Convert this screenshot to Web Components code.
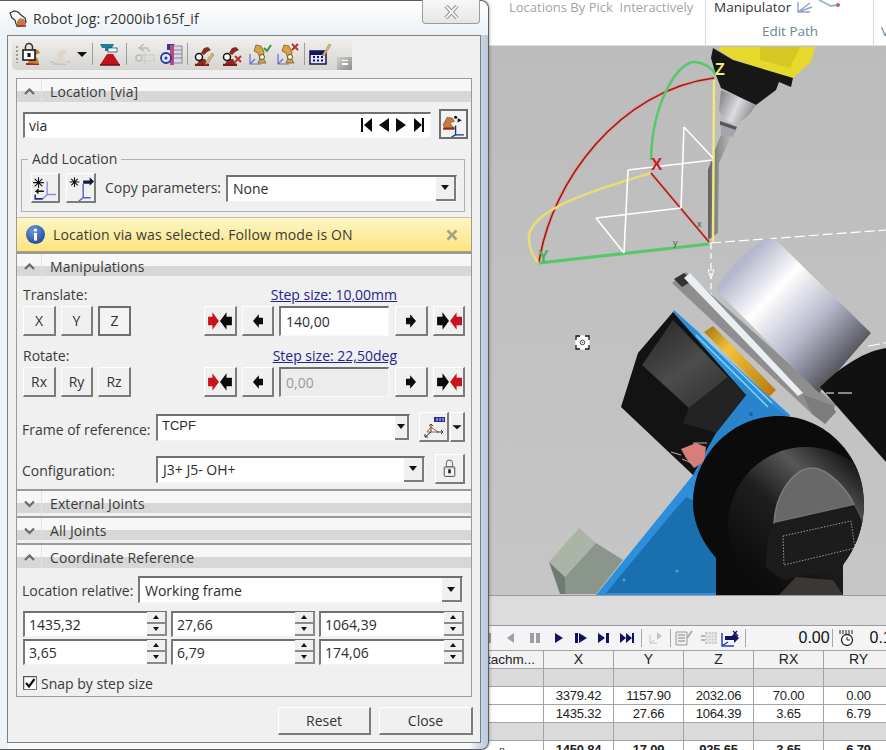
<!DOCTYPE html>
<html>
<head>
<meta charset="utf-8">
<title>Robot Jog</title>
<style>
  html, body { margin: 0; padding: 0; height: 100%; overflow: hidden; }
  body { font-family: "Open Sans", "Liberation Sans", sans-serif; font-size: 14px; color: #333; background: #fff; }
</style>
</head>
<body>
<rs-app>
  <rs-jog-window heading="Robot Jog: r2000ib165f_if">
    <rs-toolbar slot="toolbar"></rs-toolbar>

    <rs-section heading="Location [via]" first>
      <rs-row left="6" top="5">
        <rs-field text="via" w="408" h="26" nav></rs-field>
        <rs-btn w="29" h="30" pressed icon="addframe" style="margin:-1px 0 0 8px"></rs-btn>
      </rs-row>
      <rs-group heading="Add Location">
        <rs-btn w="29" h="30" icon="starleft" style="margin-left:9px"></rs-btn>
        <rs-btn w="30" h="30" icon="starright" style="margin-left:6px"></rs-btn>
        <rs-label style="margin-left:9px">Copy parameters:</rs-label>
        <rs-combo text="None" w="231" h="27" style="margin-left:5px"></rs-combo>
      </rs-group>
    </rs-section>

    <rs-infobar>Location via was selected. Follow mode is ON</rs-infobar>

    <rs-section heading="Manipulations">
      <rs-row left="6" top="8" h="16">
        <rs-label>Translate:</rs-label>
        <rs-link style="margin-left:auto;margin-right:74px">Step size: 10,00mm</rs-link>
      </rs-row>
      <rs-row left="6" top="3">
        <rs-btn w="33" h="30">X</rs-btn>
        <rs-btn w="32" h="30" style="margin-left:5px">Y</rs-btn>
        <rs-btn w="33" h="30" pressed style="margin-left:5px">Z</rs-btn>
        <rs-btn w="33" h="30" icon="bothin" style="margin-left:73px"></rs-btn>
        <rs-btn w="32" h="30" icon="left" style="margin-left:5px"></rs-btn>
        <rs-field text="140,00" w="110" h="30" style="margin-left:5px"></rs-field>
        <rs-btn w="33" h="30" icon="right" style="margin-left:6px"></rs-btn>
        <rs-btn w="32" h="30" icon="bothout" style="margin-left:5px"></rs-btn>
      </rs-row>
      <rs-row left="6" top="12" h="16">
        <rs-label>Rotate:</rs-label>
        <rs-link style="margin-left:auto;margin-right:74px">Step size: 22,50deg</rs-link>
      </rs-row>
      <rs-row left="6" top="3">
        <rs-btn w="33" h="30">Rx</rs-btn>
        <rs-btn w="32" h="30" style="margin-left:5px">Ry</rs-btn>
        <rs-btn w="33" h="30" style="margin-left:5px">Rz</rs-btn>
        <rs-btn w="33" h="30" icon="bothin" style="margin-left:73px"></rs-btn>
        <rs-btn w="32" h="30" icon="left" style="margin-left:5px"></rs-btn>
        <rs-field text="0,00" w="110" h="30" disabled style="margin-left:5px"></rs-field>
        <rs-btn w="33" h="30" icon="right" style="margin-left:6px"></rs-btn>
        <rs-btn w="32" h="30" icon="bothout" style="margin-left:5px"></rs-btn>
      </rs-row>
      <rs-row left="5" top="15" h="30">
        <rs-label style="margin-top:5px">Frame of reference:</rs-label>
        <rs-combo text="TCPF" w="254" h="27" small style="margin-left:auto"></rs-combo>
        <rs-btn w="30" h="30" icon="framebtn" style="margin-left:9px"></rs-btn>
        <rs-btn w="15" h="30" icon="drop" style="margin:0 6px 0 1px"></rs-btn>
      </rs-row>
      <rs-row left="5" top="12" h="30">
        <rs-label style="margin-top:3px">Configuration:</rs-label>
        <rs-combo text="J3+ J5- OH+" w="269" h="27" style="margin-left:auto"></rs-combo>
        <rs-btn w="30" h="30" icon="lock" style="margin:0 6px 0 10px"></rs-btn>
      </rs-row>
      <rs-row h="5"></rs-row>
    </rs-section>

    <rs-section heading="External Joints" collapsed></rs-section>
    <rs-section heading="All Joints" collapsed></rs-section>

    <rs-section heading="Coordinate Reference">
      <rs-row left="5" top="6" h="27">
        <rs-label style="margin-top:2px">Location relative:</rs-label>
        <rs-combo text="Working frame" w="325" h="27" style="margin:0 8px 0 auto"></rs-combo>
      </rs-row>
      <rs-row left="6" top="8">
        <rs-spin text="1435,32" w="144"></rs-spin>
        <rs-spin text="27,66" w="144" style="margin-left:4px"></rs-spin>
        <rs-spin text="1064,39" w="145" style="margin-left:4px"></rs-spin>
      </rs-row>
      <rs-row left="6" top="2">
        <rs-spin text="3,65" w="144"></rs-spin>
        <rs-spin text="6,79" w="144" style="margin-left:4px"></rs-spin>
        <rs-spin text="174,06" w="145" style="margin-left:4px"></rs-spin>
      </rs-row>
      <rs-row left="6" top="8" h="20">
        <rs-check>Snap by step size</rs-check>
      </rs-row>
      <rs-row h="3"></rs-row>
    </rs-section>

    <rs-btn slot="footer" w="93" h="28">Reset</rs-btn>
    <rs-btn slot="footer" w="94" h="28">Close</rs-btn>
  </rs-jog-window>
</rs-app>

<script>
// small glyph drawings, 24 units square unless noted
const robot = (arm, base) =>
  `<path d="M6 22h13" stroke="${base}" stroke-width="2"/>
   <path d="M8 21l1-4 3-1-2-4 5-5 3 1 2 3-3 1-2 2 3 3 1 5z" fill="${arm}"/>`;
const pencil = `<path d="M15 20l6-9 2 1.500-6 9-3 1z" fill="#d9b77a" stroke="#8a6b3a" stroke-width=".5"/>`;
const cross = `<path d="M16 14l6 6M22 14l-6 6" stroke="#b8322a" stroke-width="2"/>`;
const redRobot =
  `<path d="M4 23h14" stroke="#7a1d12" stroke-width="2.500"/>
   <path d="M6 22l3-5h5l3 5z" fill="#8e2a1c"/>
   <circle cx="8" cy="15" r="3.500" fill="#fff" stroke="#111" stroke-width="1.500"/>
   <path d="M10 11l3-5 4-1 3 3-4 2-3 3z" fill="#8e2a1c"/>`;
const tanRobot =
  `<path d="M8 3l5 1 3 6-1 6 3 5H10l2-5-2-5-4-2z" fill="#d9a441" stroke="#6b4d18" stroke-width=".7"/>
   <circle cx="14" cy="15" r="2.500" fill="#fff" stroke="#6b4d18"/>
   <path d="M2 12v10h11M2 22l5-5" fill="none" stroke="#6a6ad0" stroke-width="1.200"/>`;

const ICONS = {
  lockrobot: `${robot("#c77a3c", "#9b2d1b")}
    <rect x="3" y="8" width="12" height="10" fill="#fff" stroke="#111" stroke-width="1.500"/>
    <path d="M5.500 8V5a3.500 3.500 0 0 1 7 0v3" fill="none" stroke="#333" stroke-width="1.500"/>
    <rect x="7.500" y="11" width="3" height="4" fill="#111"/>`,
  greyrobot: `${robot("#ddd6cc", "#c4c4c4")}<path d="M3 20h4M20 20h3" stroke="#bbb" stroke-width="1"/>`,
  trobot: `<path d="M2 2h14l-2 4h-3v3H7V6H4z" fill="#1f7f96"/><rect x="10" y="6" width="9" height="4" fill="#fff" stroke="#1f4c70" stroke-width=".8"/>
    <path d="M2 23L9 12h6l7 11z" fill="#c0141c"/><path d="M2 23h20" stroke="#6d0c10" stroke-width="1.500"/>`,
  greyframe: `<path d="M12 2l-5 4 5 3M7 6h8l3 4" fill="none" stroke="#bbb" stroke-width="1.500"/>
    <circle cx="7" cy="16" r="3" fill="none" stroke="#bbb" stroke-width="1.500"/><rect x="10" y="13" width="12" height="6" fill="none" stroke="#c8c8c8"/>
    <path d="M13 10v12" stroke="#c8c8c8"/>`,
  bluepink: `<path d="M8 2h8l-3 3 3 3H8z" fill="#2b3f8f"/><rect x="13" y="4" width="10" height="17" fill="#d8d8ee" stroke="#555" stroke-width=".6"/>
    <path d="M13 8h10M13 12h10M13 16h10" stroke="#666" stroke-width=".7"/>
    <path d="M11 3h4v20h-4z" fill="#c2447c"/><circle cx="7" cy="16" r="5" fill="#dfe4f6" stroke="#1f3aa0" stroke-width="1.800"/><circle cx="7" cy="16" r="1.500" fill="#1f3aa0"/>`,
  redpen: redRobot + pencil,
  redx: redRobot + cross,
  tancheck: `${tanRobot}<path d="M16 6l3 3 4-6" fill="none" stroke="#3a9a3a" stroke-width="2"/>`,
  tanx: `${tanRobot}<path d="M16 2l6 6M22 2l-6 6" stroke="#b8322a" stroke-width="2"/>`,
  calendar: `<rect x="2" y="9" width="16" height="13" fill="#e4e4f2" stroke="#14145a" stroke-width="1.500"/><rect x="2" y="9" width="16" height="4" fill="#14145a"/>
    <path d="M5 15h2M9 15h2M13 15h2M5 18.500h2M9 18.500h2M13 18.500h2" stroke="#14145a" stroke-width="2"/>
    <path d="M15 12l6-10 2 1-6 10-3 1z" fill="#d9b77a" stroke="#9a7b4a" stroke-width=".5"/>`,
  addframe: `<path d="M2 12l4-7 5 1 2 3-4 1 1 3 3 2H3z" fill="#c77a3c" stroke="#6b3a14" stroke-width=".5"/><path d="M2 16h11" stroke="#8a2b18" stroke-width="2"/>
    <path d="M16 6l4 2-4 2z" fill="#111"/><circle cx="14" cy="5" r="1.500" fill="#111"/>
    <path d="M14 13v9h8M14 22l-4 2" fill="none" stroke="#1f2f9a" stroke-width="1.300"/>`,
  starleft: `<path d="M6 2v10M1 7h10M2.500 3.500l7 7M9.500 3.500l-7 7" stroke="#111" stroke-width="1"/>
    <path d="M14 6v12h8M14 18l-4 4" fill="none" stroke="#8a8ae0" stroke-width="1.200"/>
    <path d="M11 15H4l2-2M4 15l2 2" fill="none" stroke="#111" stroke-width="1.300"/><path d="M3 18v4h7" fill="none" stroke="#1f2f9a" stroke-width="1.500"/>`,
  starright: `<path d="M6 2v9M1.500 6.500h9M3 3.500l6 6M9 3.500l-6 6" stroke="#111" stroke-width="1"/>
    <path d="M14 8v13h7M14 21l-4 3" fill="none" stroke="#5a5ae0" stroke-width="1.300"/>
    <path d="M14 5h6V2l4 4-4 4V8h-6z" fill="#16163f"/>`,
  framebtn: `<rect x="12" y="2" width="11" height="5" fill="#2b2ba0"/><path d="M15 3v3M18 3v3M21 3v3" stroke="#dde" stroke-width="1"/>
    <path d="M9 9v8M9 9l-2 2M9 9l2 2" stroke="#444" stroke-width="1" fill="none"/>
    <path d="M5 17l4-5 7 5z" fill="none" stroke="#b0562c" stroke-width="1"/>
    <path d="M9 17L3 22M3 22h3M3 22v-3M15 17h6M21 17l-2-2M21 17l-2 2" fill="none" stroke="#333" stroke-width="1"/>`,
  lock: `<rect x="6" y="10" width="12" height="11" rx="1" fill="#f4f4f4" stroke="#444" stroke-width="1.100"/>
    <path d="M8.500 10V6a3.500 3.500 0 0 1 7 0v4" fill="none" stroke="#777" stroke-width="1.300"/><rect x="10.500" y="13" width="3" height="4.500" fill="#222"/><rect x="6.500" y="10.500" width="11" height="1.500" fill="#aaa"/>`,
  drop: `<path d="M4 9h16l-8 7z" fill="#111"/>`,
  left: `<path d="M18 8v8h-5v4L6 12l7-8v4z" fill="#0a0a0a"/>`,
  right: `<path d="M6 8v8h5v4l7-8-7-8v4z" fill="#0a0a0a"/>`,
  bothin: `<g transform="translate(-1 0)"><path d="M2 8h4V4l6 8-6 8v-4H2z" fill="#c8141c"/></g><path d="M23 8v8h-5v4l-6-8 6-8v4z" fill="#0a0a0a"/>`,
  bothout: `<path d="M1 8h5V4l6 8-6 8v-4H1z" fill="#0a0a0a"/><path d="M24 8v8h-6v4l-6-8 6-8v4z" fill="#c8141c" transform="translate(1 0)"/>`,
};
const ICON_SIZE = { left: 20, right: 20, lock: 21, framebtn: 24, drop: 14 };

class RsIcon extends HTMLElement {
  constructor() {
    super();
    this.shadow = this.attachShadow({ mode: "open" });
  }
  connectedCallback() {
    const size = this.getAttribute("size") || 24;
    this.shadow.innerHTML = `
      <style>:host { display: inline-flex; flex: none; width: ${size}px; height: ${size}px; } svg { display: block; }</style>
      <svg width="${size}" height="${size}" viewBox="0 0 24 24">${ICONS[this.getAttribute("name")] || ""}</svg>`;
  }
}

class RsRow extends HTMLElement {
  constructor() {
    super();
    this.shadow = this.attachShadow({ mode: "open" });
  }
  connectedCallback() {
    const left = this.getAttribute("left") || 0;
    const top = this.getAttribute("top") || 0;
    const h = this.getAttribute("h");
    this.shadow.innerHTML = `
      <style>
        :host { display: flex; align-items: center; padding-left: ${left}px; margin-top: ${top}px; ${h ? `height:${h}px;` : ""} }
      </style>
      <slot></slot>`;
  }
}

class RsLabel extends HTMLElement {
  constructor() {
    super();
    this.attachShadow({ mode: "open" }).innerHTML = `
      <style>:host { display: inline-block; white-space: nowrap; line-height: 16px; color: #3a3a3a; }</style><slot></slot>`;
  }
}

class RsLink extends HTMLElement {
  constructor() {
    super();
    this.attachShadow({ mode: "open" }).innerHTML = `
      <style>:host { display: inline-block; white-space: nowrap; line-height: 16px; color: #23238e; text-decoration: underline; }</style><slot></slot>`;
  }
}

class RsBtn extends HTMLElement {
  constructor() {
    super();
    this.shadow = this.attachShadow({ mode: "open" });
  }
  connectedCallback() {
    const w = this.getAttribute("w");
    const h = this.getAttribute("h");
    const icon = this.getAttribute("icon");
    const pressed = this.hasAttribute("pressed");
    const size = ICON_SIZE[icon] || (pressed ? 25 : 26);
    this.shadow.innerHTML = `
      <style>
        :host { display: inline-flex; flex: none; width: ${w}px; height: ${h}px; box-sizing: border-box;
          align-items: center; justify-content: center; background: #f0f0f0; color: #333; line-height: 1;
          border: 1px solid #fff; border-right: 2px solid #7c7c7c; border-bottom: 2px solid #7c7c7c; }
        :host([pressed]) { border: 2px solid #6e6e6e; background: #f3f3f3; }
      </style>
      ${icon ? `<rs-icon name="${icon}" size="${size}"></rs-icon>` : "<slot></slot>"}`;
  }
}

class RsField extends HTMLElement {
  constructor() {
    super();
    this.shadow = this.attachShadow({ mode: "open" });
  }
  connectedCallback() {
    const w = this.getAttribute("w");
    const h = this.getAttribute("h");
    const disabled = this.hasAttribute("disabled");
    const nav = this.hasAttribute("nav");
    this.shadow.innerHTML = `
      <style>
        :host { display: flex; flex: none; align-items: center; box-sizing: border-box; width: ${w}px; height: ${h}px;
          background: ${disabled ? "#ececec" : "#fff"}; color: ${disabled ? "#9a9a9a" : "#2c2c2c"};
          border-top: 2px solid #707070; border-left: 2px solid #7a7a7a; border-right: 1px solid #f8f8f8; border-bottom: 1px solid #f8f8f8;
          padding-left: ${nav ? 4 : 5}px; }
        svg { margin-left: auto; margin-right: 6px; }
      </style>
      <span>${this.getAttribute("text")}</span>
      ${nav ? `<svg width="63" height="16" viewBox="0 0 63 16" fill="#0a0a0a">
        <path d="M0 1h2v14H0zM11 1v14L3 8zM28 1v14L18 8zM35 1v14l10-7zM53 1l8 7-8 7zM61 1h2v14h-2z"/></svg>` : ""}`;
  }
}

class RsCombo extends HTMLElement {
  constructor() {
    super();
    this.shadow = this.attachShadow({ mode: "open" });
  }
  connectedCallback() {
    const small = this.hasAttribute("small");
    this.shadow.innerHTML = `
      <style>
        :host { display: flex; flex: none; align-items: center; box-sizing: border-box; width: ${this.getAttribute("w")}px; height: ${this.getAttribute("h")}px;
          background: #fff; color: #2c2c2c; border-top: 2px solid #707070; border-left: 2px solid #7a7a7a;
          border-right: 1px solid #f4f4f4; border-bottom: 1px solid #f4f4f4; padding-left: 5px; }
        span { flex: 1; white-space: nowrap; ${small ? 'font: 13px "Liberation Sans", sans-serif; margin-top: -5px; margin-left: -1px;' : ""} }
        i { display: flex; align-items: center; justify-content: center; flex: none; width: ${small ? 14 : 20}px; align-self: stretch; box-sizing: border-box;
          background: #f0f0f0; border-right: 2px solid #7c7c7c; border-bottom: 2px solid #7c7c7c; }
        i::before { content: ""; border: solid transparent; border-width: 5px 4px 0; border-top-color: #111; }
      </style>
      <span>${this.getAttribute("text")}</span><i></i>`;
  }
}

class RsSpin extends HTMLElement {
  constructor() {
    super();
    this.shadow = this.attachShadow({ mode: "open" });
  }
  connectedCallback() {
    this.shadow.innerHTML = `
      <style>
        :host { display: flex; flex: none; align-items: center; box-sizing: border-box; width: ${this.getAttribute("w")}px; height: 26px;
          background: #fff; color: #2c2c2c; border-top: 2px solid #707070; border-left: 2px solid #7a7a7a;
          border-bottom: 1px solid #f4f4f4; padding-left: 4px; }
        span { flex: 1; }
        div { display: flex; flex-direction: column; flex: none; width: 20px; align-self: stretch; margin-top: -1px; }
        i { flex: 1; display: flex; align-items: center; justify-content: center; background: #f0f0f0;
          border-right: 2px solid #8a8a8a; border-bottom: 2px solid #8a8a8a; }
        i.up::before { content: ""; border: solid transparent; border-width: 0 3px 4px; border-bottom-color: #111; }
        i.dn::before { content: ""; border: solid transparent; border-width: 4px 3px 0; border-top-color: #111; }
      </style>
      <span>${this.getAttribute("text")}</span><div><i class="up"></i><i class="dn"></i></div>`;
  }
}

class RsCheck extends HTMLElement {
  constructor() {
    super();
    this.attachShadow({ mode: "open" }).innerHTML = `
      <style>
        :host { display: inline-flex; align-items: center; gap: 4px; color: #3a3a3a; white-space: nowrap; }
        svg { display: block; flex: none; }
      </style>
      <svg width="14" height="14" viewBox="0 0 14 14">
        <rect x=".5" y=".5" width="13" height="13" fill="#fff" stroke="#777"/><path d="M.5 13.500V.5h13" fill="none" stroke="#555" stroke-width="1.500"/>
        <path d="M3 7l3 3.500L11.500 3" fill="none" stroke="#111" stroke-width="2.200"/>
      </svg><slot></slot>`;
  }
}

class RsGroup extends HTMLElement {
  constructor() {
    super();
    this.shadow = this.attachShadow({ mode: "open" });
  }
  connectedCallback() {
    this.shadow.innerHTML = `
      <style>
        :host { display: block; margin: 12px 6px 5px 4px; }
        fieldset { margin: 0; padding: 6px 0 8px; border: 1px solid #b0b0b0; display: flex; align-items: center; min-width: 0; }
        legend { padding: 0 4px; margin-left: 6px; line-height: 16px; color: #3a3a3a; }
        .inner { display: flex; align-items: center; }
      </style>
      <fieldset><legend>${this.getAttribute("heading")}</legend><div class="inner"><slot></slot></div></fieldset>`;
  }
}

class RsSection extends HTMLElement {
  constructor() {
    super();
    this.shadow = this.attachShadow({ mode: "open" });
  }
  connectedCallback() {
    const collapsed = this.hasAttribute("collapsed");
    const chevron = collapsed ? "M1 1.500l4.500 4.500L10 1.500" : "M1 6l4.500-4.500L10 6";
    this.shadow.innerHTML = `
      <style>
        :host { display: block; }
        header { display: flex; align-items: center; box-sizing: border-box; height: 27px;
          border-top: 2px solid #9a9a9a;
          background: linear-gradient(#f7f7f7 0 48%, #d7d7d7 48% 90%, #f0f0f0 90%); }
        :host([first]) header { border-top: 0; height: 26px; padding-bottom: 1px; }
        .ch { width: 25px; align-self: stretch; display: flex; align-items: center; justify-content: center; box-sizing: border-box; border-right: 1px solid #e2e2e2; }
        h2 { margin: 0 0 0 8px; font: inherit; color: #3a3a3a; line-height: 18px; letter-spacing: .1px; }
      </style>
      <header>
        <div class="ch"><svg width="11" height="8" viewBox="0 0 11 8"><path d="${chevron}" fill="none" stroke="#6a6a6a" stroke-width="2.200"/></svg></div>
        <h2>${this.getAttribute("heading")}</h2>
      </header>
      <slot></slot>`;
  }
}

class RsInfobar extends HTMLElement {
  constructor() {
    super();
    this.attachShadow({ mode: "open" }).innerHTML = `
      <style>
        :host { display: flex; align-items: center; box-sizing: border-box; height: 35px; padding: 0 13px 0 9px; gap: 8px; letter-spacing: .13px;
          background: linear-gradient(#fdf6c6, #fbe480); border-top: 1px solid #c8c4a0; border-bottom: 1px solid #a8a070; color: #3a3a3a; }
        .x { margin-left: auto; }
        svg { display: block; flex: none; }
      </style>
      <svg width="19" height="19" viewBox="0 0 19 19">
        <defs><radialGradient id="b" cx=".4" cy=".3" r=".8"><stop offset="0" stop-color="#6d9be0"/><stop offset="1" stop-color="#1c3f94"/></radialGradient></defs>
        <circle cx="9.500" cy="9.500" r="9.500" fill="url(#b)"/><circle cx="9.500" cy="5" r="1.600" fill="#fff"/><rect x="8" y="8" width="3" height="7.500" fill="#fff"/>
      </svg>
      <span><slot></slot></span>
      <svg class="x" width="12" height="12" viewBox="0 0 12 12"><path d="M1.500 1.500l9 9M10.500 1.500l-9 9" stroke="#a8a28c" stroke-width="2.600"/></svg>`;
  }
}

class RsToolbar extends HTMLElement {
  constructor() {
    super();
    this.shadow = this.attachShadow({ mode: "open" });
  }
  connectedCallback() {
    // [kind, centre x on the bar]
    const items = [["lockrobot", 20], ["greyrobot", 47], ["caret", 70], ["sep", 80], ["trobot", 98], ["sep", 114],
      ["greyframe", 132], ["bluepink", 159], ["sep", 175], ["redpen", 191], ["redx", 219], ["tancheck", 248], ["tanx", 276], ["sep", 292], ["calendar", 308]];
    let cursor = 0;
    const parts = items.map(([kind, x]) => {
      const w = kind === "sep" ? 1 : kind === "caret" ? 10 : 24;
      const gap = x - w / 2 - cursor;
      cursor = x + w / 2;
      if (kind === "sep") return `<i class="sep" style="margin-left:${gap}px"></i>`;
      if (kind === "caret") return `<i class="caret" style="margin-left:${gap}px"></i>`;
      return `<rs-icon name="${kind}" style="margin-left:${gap}px"></rs-icon>`;
    }).join("");
    this.shadow.innerHTML = `
      <style>
        :host { display: flex; align-items: center; box-sizing: border-box; width: 340px; height: 32px; margin: 2px 0 0 4px; position: relative;
          background: linear-gradient(#f0efed, #d6d4d0); border-radius: 4px 0 0 5px; }
        .grip { position: absolute; left: 4px; top: 8px; width: 2px; height: 17px; background: repeating-linear-gradient(#9a9a9a 0 2px, transparent 2px 4px); }
        .sep { width: 1px; height: 22px; background: #9c9c98; flex: none; }
        .caret { width: 0; flex: none; border: solid transparent; border-width: 5px 5px 0; border-top-color: #111; box-sizing: content-box; }
        .more { position: absolute; right: 0; top: 19px; width: 15px; height: 13px; background: linear-gradient(135deg, #d0d0d0, #8e8e8e); }
        .more::after { content: ""; position: absolute; left: 5px; top: 3px; width: 6px; height: 5px; border-top: 1px solid #fff; border-bottom: 2px solid #fff; box-sizing: border-box; }
      </style>
      <i class="grip"></i>${parts}<i class="more"></i>`;
  }
}

class RsJogWindow extends HTMLElement {
  constructor() {
    super();
    this.shadow = this.attachShadow({ mode: "open" });
  }
  connectedCallback() {
    this.shadow.innerHTML = `
      <style>
        :host { position: absolute; left: 0; top: 0; width: 489px; height: 750px; box-sizing: border-box; z-index: 2;
          border: 1px solid #5e5e5e; border-left: 0; border-radius: 0 8px 8px 0;
          background: linear-gradient(90deg, #eef3f7 0 8px, #f6f8fa 8px 470px, #c9d7e6 480px, #b9cadd);
          box-shadow: 1px 0 3px rgba(0,0,0,.25); display: flex; flex-direction: column; }
        .title { height: 34px; flex: none; display: flex; align-items: center; padding-left: 9px; gap: 5px; color: #333; position: relative; letter-spacing: .12px; background: linear-gradient(#fff, #f2f6f9 70%, #e9f0f6); border-radius: 0 8px 0 0; }
        .close { position: absolute; right: 8px; top: -1px; width: 58px; height: 24px; box-sizing: border-box; border: 1px solid #9c9c9c; border-top: 0; border-radius: 0 0 4px 4px;
          background: linear-gradient(#f8f8f8, #e6e6e6); display: flex; align-items: center; justify-content: center; }
        .client { margin: 0 7px 6px 7px; flex: 1; display: flex; flex-direction: column; background: #f0f0f0; border: 1px solid #7f7f7f; }
        .sections { margin: 8px 8px 0 8px; border: 1px solid #9a9a9a; }
        .footer { display: flex; justify-content: flex-end; gap: 8px; margin: 10px 7px 0 0; }
      </style>
      <div class="title">
        <svg width="19" height="17" viewBox="0 0 19 17">
          <path d="M1 3l4-2 4 1 3 3 4 3 1 4-2 3-5 1-3-2-1-4-3-2z" fill="#f8f8f8" stroke="#333" stroke-width="1.200"/>
          <path d="M8 11l3-3 4 1 2 5-2 2H8z" fill="#c47a44"/><path d="M7 16h10" stroke="#8a2b18" stroke-width="1.500"/>
        </svg>
        <span>${this.getAttribute("heading")}</span>
        <div class="close"><svg width="17" height="14" viewBox="0 0 17 14"><path d="M3 1l11 12M14 1L3 13" stroke="#8e8e8e" stroke-width="4"/><path d="M3 1l11 12M14 1L3 13" stroke="#f2f2f2" stroke-width="2"/></svg></div>
      </div>
      <div class="client">
        <slot name="toolbar"></slot>
        <div class="sections"><slot></slot></div>
        <div class="footer"><slot name="footer"></slot></div>
      </div>`;
  }
}

class RsRibbon extends HTMLElement {
  constructor() {
    super();
    this.attachShadow({ mode: "open" }).innerHTML = `
      <style>
        :host { display: flex; flex: none; height: 45px; background: #fff; position: relative; overflow: hidden; border-bottom: 1px solid #e0e0e0; box-sizing: content-box; }
        .col { position: relative; height: 100%; box-sizing: border-box; border-right: 1px solid #dcdcdc; flex: none; }
        .pick { width: 706px; padding: 0 0 0 509px; color: #a4a4a4; font-size: 13px; line-height: 15px; white-space: pre; }
        .manip { width: 168px; padding-left: 8px; }
        .top { line-height: 15px; font-size: 13.500px; color: #333; display: flex; align-items: flex-start; gap: 4px; }
        .name { text-align: center; color: #6c8694; margin-top: 8px; margin-left: 26px; font-size: 13.500px; line-height: 16px; width: 100px; }
        .v { padding: 23px 0 0 7px; color: #6c8694; font-size: 13.500px; line-height: 16px; }
        svg { display: block; }
      </style>
      <div class="col pick">Locations By Pick  Interactively</div>
      <div class="col manip">
        <div class="top">Manipulator
          <svg width="50" height="14" viewBox="0 0 50 14"><path d="M3 2v10h12M3 12l12-9M3 12l14-5" fill="none" stroke="#8ea3c7" stroke-width="1.400"/><path d="M24 0l12 6 6-1" fill="none" stroke="#9db0cc" stroke-width="1.800"/><circle cx="43" cy="5" r="2" fill="#cc5b6a"/></svg>
        </div>
        <div class="name">Edit Path</div>
      </div>
      <div class="v">V</div>`;
  }
}

class RsViewport extends HTMLElement {
  constructor() {
    super();
    this.attachShadow({ mode: "open" }).innerHTML = `
      <style>
        :host { display: block; flex: none; height: 549px; background: #bfbfbf; overflow: hidden; }
        svg { display: block; margin-left: 489px; }
      </style>
      <svg width="397" height="549" viewBox="489 46 397 549" fill="none">
        <defs>
          <linearGradient id="bg" x1="0" y1="0" x2="0" y2="1"><stop offset="0" stop-color="#bcbcbc"/><stop offset="1" stop-color="#c6c6c6"/></linearGradient>
          <linearGradient id="cyl" gradientUnits="userSpaceOnUse" x1="742" y1="264" x2="845" y2="363">
            <stop offset="0" stop-color="#b4b8cc"/><stop offset=".3" stop-color="#ffffff"/><stop offset=".65" stop-color="#b8bacc"/><stop offset="1" stop-color="#55565f"/></linearGradient>
          <linearGradient id="gold" gradientUnits="userSpaceOnUse" x1="709" y1="330" x2="771" y2="393"><stop offset="0" stop-color="#b08218"/><stop offset=".3" stop-color="#f2c23a"/><stop offset="1" stop-color="#b97e10"/></linearGradient>
          <linearGradient id="inner" gradientUnits="userSpaceOnUse" x1="735" y1="560" x2="835" y2="450"><stop offset="0" stop-color="#0c0c0c"/><stop offset=".45" stop-color="#1e1e1e"/><stop offset=".75" stop-color="#575757"/><stop offset="1" stop-color="#1c1c1c"/></linearGradient>
          <linearGradient id="facet" gradientUnits="userSpaceOnUse" x1="650" y1="330" x2="700" y2="400"><stop offset="0" stop-color="#2c2c2c"/><stop offset=".6" stop-color="#4c4c4c"/><stop offset="1" stop-color="#3a3a3a"/></linearGradient>
          <linearGradient id="tool" gradientUnits="userSpaceOnUse" x1="706" y1="0" x2="730" y2="0"><stop offset="0" stop-color="#555"/><stop offset=".5" stop-color="#8e8e8e"/><stop offset="1" stop-color="#b4b4b4"/></linearGradient>
          <linearGradient id="neck" gradientUnits="userSpaceOnUse" x1="722" y1="95" x2="755" y2="110"><stop offset="0" stop-color="#8c8c92"/><stop offset=".5" stop-color="#dcdce0"/><stop offset="1" stop-color="#8a8a90"/></linearGradient>
          <clipPath id="ballclip"><path d="M716 595V558C700 540 693 520 693 503C693 456 731 416 779 416C826 416 864 456 864 503C864 535 850 555 843 565V595z"/></clipPath>
        </defs>
        <rect x="489" y="46" width="397" height="549" fill="url(#bg)"/>

        <!-- robot wrist and tool -->
        <path d="M719 47H815L811 62L793 78L756 67L731 58L719 50z" fill="#e6d92b"/>
        <path d="M760 47H800L790 68L760 60z" fill="#d6c822"/>
        <path d="M711 58L713 48L733 60L793 78L791 87L779 82L776 90L756 105L721 88L716 75z" fill="#171717"/>
        <path d="M721 90L756 105L749 115L736 125L724 120L719 110z" fill="url(#neck)"/>
        <path d="M720 121L737 127L735 131L720 125z" fill="#56565c"/>
        <path d="M721 125L736 130L733 137L721 135z" fill="#a4a4aa"/>
        <path d="M721 135L731 137L719 163L718 233L708 240L708 170L716 147z" fill="url(#tool)"/>

        <!-- axes -->
        <path d="M539 262C552 180 620 90 714 78" stroke="#e89a92" stroke-width="3.500"/>
        <path d="M539 262C552 180 620 90 714 78" stroke="#8e1f1a" stroke-width="1.500"/>
        <path d="M651 160C652 100 680 60 695 62C704 63 712 68 716 75" stroke="#57c86a" stroke-width="2.500"/>
        <path d="M651 173C600 188 525 210 529 240C530 250 534 258 538 262" stroke="#ecdd73" stroke-width="2.500"/>
        <path d="M714 80L713 243" stroke="#efe67e" stroke-width="2.500"/>
        <path d="M651 173L709 242" stroke="#e89a92" stroke-width="3"/><path d="M651 173L709 242" stroke="#8e1f1a" stroke-width="1.300"/>
        <path d="M539 263L709 244" stroke="#57c86a" stroke-width="3.200"/>
        <path d="M684 127L713 158M684 127L681 208M628 170L713 160M628 170L624 253M596 218L681 208M596 218L624 253" stroke="#fff" stroke-width="1.600"/>
        <path d="M711 243L886 230" stroke="#fff" stroke-width="1.200" stroke-dasharray="10 4"/>
        <path d="M711 243V296" stroke="#fff" stroke-width="1.200" stroke-dasharray="6 4"/>
        <path d="M708 270h6l-3 9z" stroke="#fff"/>
        <text x="651" y="170" font-family="Liberation Sans" font-weight="700" font-size="17" fill="#c8222a">X</text>
        <text x="538" y="262" font-family="Liberation Sans" font-weight="700" font-size="16" fill="#3cb85c">Y</text>
        <text x="715" y="75" font-family="Liberation Sans" font-weight="700" font-size="16" fill="#f3e985">Z</text>
        <text x="697" y="227" font-family="Liberation Sans" font-size="9" fill="#2c6a2c">x</text>
        <text x="673" y="246" font-family="Liberation Sans" font-size="9" fill="#2c6a2c">y</text>

        <!-- flange, cylinder, ring -->
        <path d="M672 283L686 272L836 405L826 423L810 412z" fill="#8e8e8e"/>
        <path d="M674 279L684 273L692 281L682 287z" fill="#333"/>
        <path d="M690 273L803 393L798 396L684 278z" fill="#e8eef2"/>
        <path d="M803 395L832 405L836 412L825 424L812 414z" fill="#7c7c7c"/>
        <path d="M766 238C772 238 776 240 780 244L871 333L819 393L716 290C724 274 744 250 766 238z" fill="url(#cyl)"/>

        <!-- blue bracket -->
        <path d="M674 310L790 415L716 595H596L693 475L640 380z" fill="#2d8fdc"/>
        <path d="M735 378L786 415L700 482L690 470z" fill="#2a84cc"/>
        <path d="M606 593H716V557L699 503L686 497L669 517z" fill="#1a6fae"/>
        <path d="M704 332L713 326L776 390L769 397z" fill="url(#gold)"/>
        <path d="M696 335L768 407M700 333L772 403" stroke="#8fd6f2" stroke-width="1.300"/>
        <circle cx="677" cy="571" r="1.500" fill="#4aa0d8"/><circle cx="624" cy="580" r="1.500" fill="#4aa0d8"/><circle cx="751" cy="414" r="2" fill="#1d5ca8"/>

        <!-- motor block -->
        <path d="M673 312L746 395L716 433L693 475L621 407L638 353z" fill="#131313"/>
        <path d="M642 365L673 320L728 377L689 408z" fill="url(#facet)"/>
        <path d="M689 408L728 377L746 395L716 433L683 423z" fill="#232323"/>
        <path d="M681 449L696 443L706 447L704 462L694 468L686 458z" fill="#d87d78"/>
        <path d="M693 443h14M671 452l10 3M682 459l10 4" stroke="#b4b4b4" stroke-width="1"/>

        <!-- right housing -->
        <path d="M820 387C835 372 860 352 886 348V462z" fill="#111"/>
        <path d="M826 393h8M838 393h14M868 346l12-2M883 343h3" stroke="#fff" stroke-width="1"/>

        <!-- joint -->
        <path d="M716 595V558C700 540 693 520 693 503C693 456 731 416 779 416C826 416 864 456 864 503C864 535 850 555 843 565V595z" fill="#0b0b0b"/>
        <g clip-path="url(#ballclip)">
          <circle cx="806" cy="525" r="78" fill="url(#inner)"/>
          <path d="M774 523C776 490 796 468 812 468C828 468 848 490 854 505z" fill="#686868" stroke="#7c7c7c" stroke-width="1.500"/>
          <path d="M774 523L854 505L863 523L863 540L844 567L783 580L766 567C766 550 768 535 774 523z" fill="#1c1c1c"/>
          <path d="M783 536L851 521L855 548L784 565z" stroke="#bdbdbd" stroke-width=".8" stroke-dasharray="1.500 1.500"/>
          <path d="M779 595L796 577L833 580L843 595z" fill="#3c3733"/>
        </g>

        <!-- grey-green box -->
        <path d="M549 562L579 528L596 543L565 577z" fill="#aab5a8"/>
        <path d="M565 577L596 543L623 560L596 594H566z" fill="#8a968b"/>
        <path d="M549 562L565 577L566 594H560z" fill="#6f7b70"/>

        <!-- cursor -->
        <g transform="translate(575 335)">
          <rect x=".5" y=".5" width="14" height="14" fill="#fff"/>
          <path d="M1 5V1h4M10 1h4v4M14 10v4h-4M5 14H1v-4" stroke="#111" stroke-width="1.300"/>
          <circle cx="7.500" cy="7.500" r="2.300" stroke="#444" stroke-width="1"/><circle cx="7.500" cy="7.500" r=".8" fill="#444"/>
        </g>
      </svg>`;
  }
}

class RsSimBar extends HTMLElement {
  constructor() {
    super();
    this.shadow = this.attachShadow({ mode: "open" });
  }
  connectedCallback() {
    const grey = "#9aa0a6", navy = "#12125e";
    const icon = (d, c, w = 14) => `<svg width="${w}" height="14" viewBox="0 0 ${w} 14"><path d="${d}" fill="${c}"/></svg>`;
    const items = [
      [486, icon("M2 2h4v10H2zM8 2h4v10H8z", grey)],
      [511, icon("M10 2v10L3 7z", grey)], [535, icon("M2 2h4v10H2zM8 2h4v10H8z", grey)],
      [559, icon("M3 2l8 5-8 5z", navy)], [581, icon("M1 2h3v10H1zM5 2l8 5-8 5z", navy)],
      [603, icon("M2 2l7 5-7 5zM10 2h3v10h-3z", navy)], [627, icon("M0 2l6 5-6 5zM6 2l6 5-6 5zM12 2h2v10h-2z", navy)],
      [641, "sep"],
      [655, `<svg width="16" height="16" viewBox="0 0 16 16"><path d="M3 5v8h7M3 13l4-3" fill="none" stroke="#c4c4c4"/><path d="M10 2l5 4-5 4z" fill="#c4c4c4"/></svg>`],
      [670, "sep"],
      [684, `<svg width="18" height="16" viewBox="0 0 18 16"><path d="M1 2h11v13H1z" fill="#eee" stroke="#999"/><path d="M3 5h7M3 8h7M3 11h7" stroke="#888"/><path d="M12 8l5-7" stroke="#aaa" stroke-width="2"/></svg>`],
      [709, `<svg width="17" height="16" viewBox="0 0 17 16"><rect x="4" y="2" width="12" height="12" fill="#ccc"/><path d="M4 5h12M4 8h12M4 11h12M7 2v12M10 2v12M13 2v12" stroke="#eee"/><path d="M0 6h4M0 10h4" stroke="#777"/></svg>`],
      [730, `<svg width="20" height="17" viewBox="0 0 20 17"><path d="M2 3v13h12M2 16l6-4" fill="none" stroke="#2a3fc0" stroke-width="1.500"/><path d="M5 6h9V3l5 5-5 5v-3H5z" fill="#12125e"/><path d="M11 8l6-7M13 1l5 5" stroke="#12125e" stroke-width="1.300"/></svg>`],
      [745, "sep"],
    ];
    let cursor = 0;
    const parts = items.map(([x, html]) => {
      const w = html === "sep" ? 1 : 22;
      const gap = x - w / 2 - cursor;
      cursor = x + w / 2;
      return html === "sep"
        ? `<i class="sep" style="margin-left:${gap}px"></i>`
        : `<span class="cell" style="margin-left:${gap}px">${html}</span>`;
    }).join("");
    this.shadow.innerHTML = `
      <style>
        :host { display: flex; flex: none; align-items: center; height: 25px; box-sizing: border-box; overflow: hidden; background: #f4f4f6; border-top: 1px solid #9a9a9a;
          font: 16px "Liberation Sans", sans-serif; color: #111; white-space: nowrap; }
        .cell { width: 22px; flex: none; display: flex; justify-content: center; }
        .sep { width: 1px; height: 18px; flex: none; background: #a8a8a8; }
        .val { margin-left: 53px; width: 32px; flex: none; }
        svg { display: block; }
      </style>
      ${parts}
      <span class="val">0.00</span><i class="sep" style="margin-left:1px"></i>
      <svg style="margin-left:5px;flex:none" width="18" height="18" viewBox="0 0 18 18"><path d="M2 1v4M5 1v4M8 1v4M11 1v4M14 1v4" stroke="#222"/><circle cx="9" cy="11" r="5.500" fill="#fff" stroke="#222" stroke-width="1.300"/><path d="M9 8v3h3" stroke="#222" fill="none"/></svg>
      <span style="margin-left:14px">0.1</span>`;
  }
}

class RsGrid extends HTMLElement {
  constructor() {
    super();
    this.shadow = this.attachShadow({ mode: "open" });
  }
  connectedCallback() {
    const rows = [
      ["", "", "", "", "", ""],
      ["", "3379.42", "1157.90", "2032.06", "70.00", "0.00"],
      ["", "1435.32", "27.66", "1064.39", "3.65", "6.79"],
      ["", "", "", "", "", ""],
      [`<svg width="24" height="10" viewBox="0 0 24 10"><path d="M8 10V2a2 2 0 0 1 4 0v8M6 10V4" fill="none" stroke="#333"/><circle cx="22" cy="8" r="2" fill="#b0202a"/></svg>`, "1450.84", "17.09", "925.65", "3.65", "6.79"],
    ];
    const kinds = ["shade", "", "", "shade", "bold"];
    this.shadow.innerHTML = `
      <style>
        :host { display: block; flex: none; height: 100px; overflow: hidden; }
        table { table-layout: fixed; border-collapse: collapse; width: 893px; font: 13px "Liberation Sans", sans-serif; letter-spacing: -.2px; color: #222; }
        td, th { height: 17px; padding: 0; border: 1px solid #a4a4a4; text-align: center; font-weight: 400; line-height: 17px; overflow: hidden; white-space: nowrap; }
        thead th { background: #f2f2f2; font-size: 14px; letter-spacing: 0; }
        thead th:first-child { text-align: right; padding-right: 8px; box-sizing: border-box; font-size: 13.500px; }
        .shade td { background: #dadada; }
        .bold td { font-weight: 700; background: #fff; }
        .bold td:first-child { text-align: left; padding-left: 491px; box-sizing: border-box; }
        tbody td { background: #fff; }
        svg { display: block; margin-top: 7px; }
      </style>
      <table>
        <colgroup><col style="width:543px"><col style="width:70px"><col style="width:70px"><col style="width:70px"><col style="width:70px"><col style="width:70px"></colgroup>
        <thead><tr><th>Attachm...</th><th>X</th><th>Y</th><th>Z</th><th>RX</th><th>RY</th></tr></thead>
        <tbody>${rows.map((r, i) => `<tr class="${kinds[i]}">${r.map((c) => `<td>${c}</td>`).join("")}</tr>`).join("")}</tbody>
      </table>`;
  }
}

class RsApp extends HTMLElement {
  constructor() {
    super();
    this.attachShadow({ mode: "open" }).innerHTML = `
      <style>
        :host { display: flex; flex-direction: column; position: relative; width: 886px; height: 750px; overflow: hidden; background: #fff; }
        .strip { flex: none; height: 30px; background: #dcdcdc; border-top: 1px solid #9a9a9a; box-sizing: border-box; }
      </style>
      <rs-ribbon></rs-ribbon>
      <rs-viewport></rs-viewport>
      <div class="strip"></div>
      <rs-sim-bar></rs-sim-bar>
      <rs-grid></rs-grid>
      <slot></slot>`;
  }
}

customElements.define("rs-icon", RsIcon);
customElements.define("rs-row", RsRow);
customElements.define("rs-label", RsLabel);
customElements.define("rs-link", RsLink);
customElements.define("rs-btn", RsBtn);
customElements.define("rs-field", RsField);
customElements.define("rs-combo", RsCombo);
customElements.define("rs-spin", RsSpin);
customElements.define("rs-check", RsCheck);
customElements.define("rs-group", RsGroup);
customElements.define("rs-section", RsSection);
customElements.define("rs-infobar", RsInfobar);
customElements.define("rs-toolbar", RsToolbar);
customElements.define("rs-jog-window", RsJogWindow);
customElements.define("rs-ribbon", RsRibbon);
customElements.define("rs-viewport", RsViewport);
customElements.define("rs-sim-bar", RsSimBar);
customElements.define("rs-grid", RsGrid);
customElements.define("rs-app", RsApp);
</script>
</body>
</html>
